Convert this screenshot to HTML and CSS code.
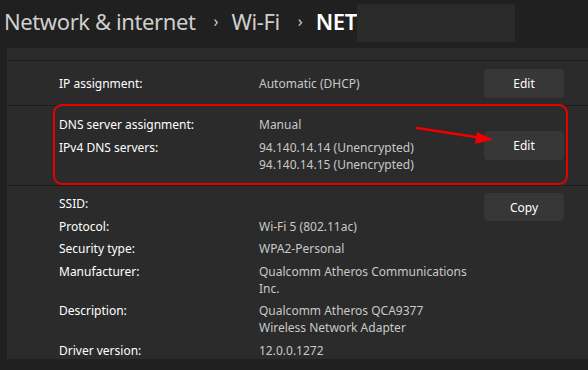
FILE: index.html
```
<!DOCTYPE html>
<html lang="en">
<head>
    <meta charset="UTF-8">
    <meta name="viewport" content="width=device-width, initial-scale=1.0">
    <title>Wi-Fi properties</title>
    <link rel="stylesheet" href="styles.css">
</head>
<body>
    <div class="breadcrumb">
        <span class="crumb">Network &amp; internet</span>
        <span class="chevron">&#x203A;</span>
        <span class="crumb">Wi-Fi</span>
        <span class="chevron">&#x203A;</span>
        <span class="crumb current">NET</span>
        <span class="redacted"></span>
    </div>

    <div class="card">
        <div class="group clipped"></div>

        <div class="group centered">
            <div class="fields">
                <span class="label">IP assignment:</span>
                <span class="value">Automatic (DHCP)</span>
            </div>
            <button class="btn">Edit</button>
        </div>

        <div class="group centered dns">
            <div class="fields">
                <span class="label">DNS server assignment:</span>
                <span class="value">Manual</span>
                <span class="label">IPv4 DNS servers:</span>
                <span class="value">94.140.14.14 (Unencrypted)<br>94.140.14.15 (Unencrypted)</span>
            </div>
            <button class="btn">Edit</button>

            <!-- annotation drawn over the screenshot -->
            <div class="highlight"></div>
            <svg class="arrow" width="90" height="30" viewBox="0 0 90 30">
                <line x1="1" y1="3" x2="66" y2="13" stroke="#f00000" stroke-width="2.5" stroke-linecap="round"/>
                <polygon points="77,14.5 61,7 59,19" fill="#f00000"/>
            </svg>
        </div>

        <div class="group top">
            <div class="fields">
                <span class="label">SSID:</span>
                <span class="value"></span>
                <span class="label">Protocol:</span>
                <span class="value">Wi-Fi 5 (802.11ac)</span>
                <span class="label">Security type:</span>
                <span class="value">WPA2-Personal</span>
                <span class="label">Manufacturer:</span>
                <span class="value">Qualcomm Atheros Communications Inc.</span>
                <span class="label">Description:</span>
                <span class="value">Qualcomm Atheros QCA9377 Wireless Network Adapter</span>
                <span class="label">Driver version:</span>
                <span class="value">12.0.0.1272</span>
            </div>
            <button class="btn copy">Copy</button>
        </div>
    </div>
</body>
</html>
```

FILE: styles.css
```
* {
    margin: 0;
    padding: 0;
    box-sizing: border-box;
}

body {
    font-family: "Noto Sans", "Open Sans", sans-serif;
    background: #202020;
    color: #ffffff;
    width: 588px;
    height: 370px;
    overflow: hidden;
}

.breadcrumb {
    height: 48px;
    display: flex;
    align-items: flex-start;
    padding-left: 4px;
    font-size: 22px;
    line-height: 30px;
    padding-top: 6px;
    color: #cfcfcf;
}

.crumb {
    letter-spacing: -0.4px;
}

.chevron {
    font-size: 16px;
    margin: 0 13px 0 18px;
}

.current {
    color: #ffffff;
    font-weight: 600;
}

.redacted {
    width: 158px;
    height: 38px;
    margin-top: -2px;
    background: #2a2a2a;
}

.card {
    margin-left: 7px;
    width: 600px;
    background: #2b2b2b;
    font-size: 12px;
    line-height: 17px;
}

.group {
    display: flex;
    padding-left: 52px;
    border-bottom: 1px solid #1d1d1d;
    position: relative;
}

.group.clipped {
    height: 13px;
}

.group.centered {
    align-items: center;
    height: 45px;
}

.group.dns {
    height: 80px;
}

.group.top {
    align-items: flex-start;
    padding-top: 9px;
    border-bottom: none;
}

.fields {
    width: 425px;
    display: grid;
    grid-template-columns: 200px 210px;
    row-gap: 5.5px;
}

.dns .fields {
    row-gap: 6px;
    margin-top: -2px;
}

.label {
    color: #ffffff;
}

.value {
    color: #c8c8c8;
}

.btn {
    width: 80px;
    height: 29px;
    border: none;
    border-radius: 4px;
    background: #373737;
    color: #ffffff;
    font-family: inherit;
    font-size: 12px;
}

.btn.copy {
    height: 28px;
    margin-top: -2px;
}

.highlight {
    position: absolute;
    left: 46px;
    top: -2px;
    width: 515px;
    height: 81px;
    border: 2px solid #e80000;
    border-radius: 9px;
}

.arrow {
    position: absolute;
    left: 409px;
    top: 19px;
}
```
